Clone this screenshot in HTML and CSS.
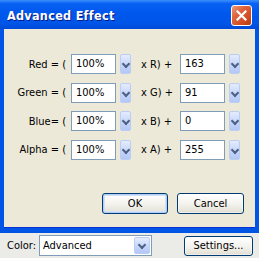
FILE: index.html
```html
<!DOCTYPE html>
<html lang="en">
<head>
    <meta charset="UTF-8">
    <title>Advanced Effect</title>
    <link rel="stylesheet" href="styles.css">
</head>
<body>
    <div class="dialog">
        <div class="titlebar">
            <span class="title">Advanced Effect</span>
            <button class="close" aria-label="Close">
                <svg width="11" height="11" viewBox="0 0 11 11">
                    <path d="M1.5 1.5 L9.5 9.5 M9.5 1.5 L1.5 9.5" stroke="#fff" stroke-width="2.2" stroke-linecap="square"/>
                </svg>
            </button>
        </div>
        <div class="content">
            <div class="rows">
                <div class="row">
                    <span class="label">Red = (</span>
                    <span class="box">100%</span>
                    <span class="drop"></span>
                    <span class="mid">x R) +</span>
                    <span class="box">163</span>
                    <span class="drop"></span>
                </div>
                <div class="row">
                    <span class="label">Green = (</span>
                    <span class="box">100%</span>
                    <span class="drop"></span>
                    <span class="mid">x G) +</span>
                    <span class="box">91</span>
                    <span class="drop"></span>
                </div>
                <div class="row">
                    <span class="label">Blue= (</span>
                    <span class="box">100%</span>
                    <span class="drop"></span>
                    <span class="mid">x B) +</span>
                    <span class="box">0</span>
                    <span class="drop"></span>
                </div>
                <div class="row">
                    <span class="label">Alpha = (</span>
                    <span class="box">100%</span>
                    <span class="drop"></span>
                    <span class="mid">x A) +</span>
                    <span class="box">255</span>
                    <span class="drop"></span>
                </div>
            </div>
            <div class="actions">
                <button class="btn ok">OK</button>
                <button class="btn cancel">Cancel</button>
            </div>
        </div>
    </div>

    <div class="footer">
        <span class="footer-label">Color:</span>
        <div class="combo">
            <span class="combo-text">Advanced</span>
            <span class="drop combo-drop"></span>
        </div>
        <button class="btn settings">Settings...</button>
    </div>
</body>
</html>
```

FILE: styles.css
```css
body {
    margin: 0;
    width: 259px;
    height: 258px;
    overflow: hidden;
    background-color: #ebebe8;
    font-family: "DejaVu Sans Condensed", "DejaVu Sans", Tahoma, sans-serif;
    font-size: 11px;
    color: #000;
}

.dialog {
    width: 259px;
    display: flex;
    flex-direction: column;
    background-color: #0055e5;
}

.titlebar {
    height: 29px;
    display: flex;
    align-items: center;
    justify-content: space-between;
    padding: 0 7px 0 7px;
    background: linear-gradient(#3d8ffb 0%, #0a62f4 12%, #0058ee 40%, #0055e8 80%, #0049d8 100%);
}

.title {
    color: #fff;
    font-weight: bold;
    font-size: 12.5px;
    letter-spacing: 0.3px;
    text-shadow: 1px 1px #0a1a83;
    margin-top: 1px;
}

.close {
    width: 21px;
    height: 21px;
    padding: 0;
    border: 1px solid #fff;
    border-radius: 3px;
    background: linear-gradient(135deg, #ec9a7c 0%, #e0643e 35%, #cf4a20 75%, #b53a12 100%);
    display: flex;
    align-items: center;
    justify-content: center;
    margin-top: 2px;
}

.content {
    margin: 0 4px 5px 4px;
    background-color: #ece9d8;
    padding: 25px 11px 13px 0;
    display: flex;
    flex-direction: column;
    border-bottom: 1px solid #0831d9;
}

.rows {
    display: flex;
    flex-direction: column;
    gap: 8.5px;
}

.row {
    display: flex;
    align-items: center;
    height: 20px;
}

.label {
    width: 62px;
    margin-right: 5px;
    text-align: right;
    white-space: nowrap;
}

.box {
    width: 39px;
    height: 18px;
    line-height: 17px;
    padding-left: 4px;
    background-color: #fff;
    border: 1px solid #7f9db9;
}

.drop {
    width: 11px;
    height: 20px;
    margin-left: 4px;
    box-sizing: border-box;
    border: 1px solid #bccdf4;
    border-radius: 2px;
    background: linear-gradient(#e4ecfd, #c3d4fa 60%, #b4c8f6);
    position: relative;
}

.drop::after {
    content: '';
    position: absolute;
    left: 2px;
    top: 6px;
    width: 4px;
    height: 4px;
    border-right: 2px solid #4d6185;
    border-bottom: 2px solid #4d6185;
    transform: rotate(45deg);
}

.mid {
    width: 39px;
    padding-left: 10px;
    white-space: nowrap;
}

.actions {
    display: flex;
    justify-content: flex-end;
    gap: 9px;
    margin-top: 33px;
}

.btn {
    height: 21px;
    padding: 0;
    font-family: inherit;
    font-size: 11px;
    color: #000;
    border: 1px solid #003c74;
    border-radius: 3px;
    background: linear-gradient(#ffffff 0%, #f4f3ee 50%, #e6e4d9 90%, #d6d0c5 100%);
    box-shadow: inset 0 0 0 1px rgba(255, 255, 255, 0.6);
}

.ok {
    width: 66px;
    box-shadow: inset 0 0 0 1px #b4cdf6, inset 0 0 0 2px #d2e0f8;
}

.cancel {
    width: 67px;
}

.footer {
    display: flex;
    align-items: center;
    height: 26px;
    padding: 0 0 0 7px;
}

.footer-label {
    width: 32px;
}

.combo {
    width: 113px;
    height: 21px;
    box-sizing: border-box;
    display: flex;
    align-items: center;
    justify-content: space-between;
    background-color: #fff;
    border: 1px solid #7f9db9;
    padding: 0 1px 0 3px;
}

.combo-drop {
    width: 16px;
    height: 17px;
}

.combo-drop::after {
    left: 4px;
    top: 4px;
}

.settings {
    width: 69px;
    height: 20px;
    margin-left: 32px;
}
```
